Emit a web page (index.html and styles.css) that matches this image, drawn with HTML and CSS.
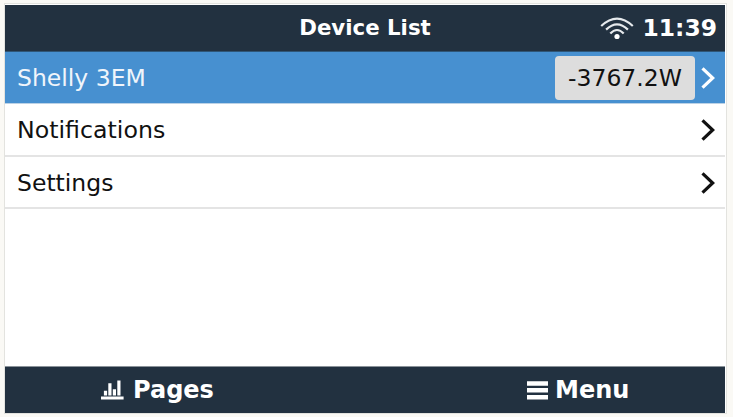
FILE: index.html
```html
<!DOCTYPE html>
<html lang="en">
<head>
<meta charset="utf-8">
<title>Device List</title>
<link rel="stylesheet" href="styles.css">
</head>
<body>
<main class="screen">
  <header class="topbar">
    <h1 class="title">Device List</h1>
    <div class="status">
      <svg class="wifi" width="34" height="24" viewBox="0 0 34 24" fill="none" stroke="#e6e9ec" stroke-width="2.2">
        <path d="M1.2 10Q17-4.8 32.8 10M6.1 13.6Q17 3.2 27.9 13.6M10.3 17.5Q17 10.5 23.7 17.5"/>
        <circle cx="17" cy="20.5" r="2.6" fill="#fff" stroke="none"/>
      </svg>
      <span class="clock">11:39</span>
    </div>
  </header>
  <nav class="list">
    <div class="row selected">
      <span class="label">Shelly 3EM</span>
      <span class="value">-3767.2W</span>
      <svg class="chevron" width="14" height="22" viewBox="0 0 14 22"><path d="M1.5 1.4 11.7 11 1.5 20.6"/></svg>
    </div>
    <div class="row">
      <span class="label wide">Notifications</span>
      <svg class="chevron" width="14" height="22" viewBox="0 0 14 22"><path d="M1.5 1.4 11.7 11 1.5 20.6"/></svg>
    </div>
    <div class="row last">
      <span class="label">Settings</span>
      <svg class="chevron" width="14" height="22" viewBox="0 0 14 22"><path d="M1.5 1.4 11.7 11 1.5 20.6"/></svg>
    </div>
  </nav>
  <footer class="toolbar">
    <div class="action pages">
      <svg width="23" height="20" viewBox="0 0 23 20" fill="#fff"><path d="M0 16.5h22.6v2.9H0zM2.9 10.7h3.2v4.8H2.9zM7.3 3.2h3.2v12.3H7.3zM11.8 9.2h3.2v6.3h-3.2zM16.3.4h3.2v15.1h-3.2z"/></svg>
      <span>Pages</span>
    </div>
    <div class="action menu">
      <svg width="21" height="20" viewBox="0 0 21 20" fill="#fff"><path d="M0 1.2h21v4.5H0zM0 8h21v4.5H0zM0 15h21v4.5H0z"/></svg>
      <span>Menu</span>
    </div>
  </footer>
</main>
</body>
</html>
```
FILE: styles.css
```css
* { box-sizing: border-box; }

body {
  margin: 0;
  height: 417px;
  padding: 3px 7px 4px 4px;
  background: #faf9f5;
  font-family: "DejaVu Sans", sans-serif;
  font-size: 23.5px;
  color: #111;
  overflow: hidden;
}

.screen {
  display: flex;
  flex-direction: column;
  width: 723px;
  height: 411px;
  border: 1px solid #e3e3df;
  padding: 1px 1px 0 0;
  background: #fff;
}

.topbar {
  display: grid;
  grid-template-columns: 1fr auto 1fr;
  align-items: center;
  flex: none;
  height: 47px;
  background: #223140;
  border-bottom: 1px solid #2f5677;
  color: #fff;
}

.title {
  grid-column: 2;
  margin: 0;
  font-size: 21.3px;
  line-height: 46px;
}

.status {
  display: flex;
  justify-content: flex-end;
  align-items: center;
  gap: 9px;
  padding-right: 8px;
}

.clock {
  font-size: 23.4px;
  font-weight: bold;
  line-height: 46px;
}

.list { flex: 1; }

.row {
  display: flex;
  align-items: center;
  height: 53px;
  padding: 0 10px 0 12px;
  border-bottom: 2px solid #e4e4e4;
}

.row.last {
  height: 52px;
  padding-top: 1px;
}

.row.selected {
  height: 52px;
  background: #4790d0;
  border-bottom: 1px solid #bcd2e6;
  color: #f0f5fb;
}

.label { flex: 1; }

.label.wide { font-size: 23.7px; }

.value {
  width: 140px;
  height: 44px;
  margin-right: 6px;
  border-radius: 4px;
  background: #ddd;
  color: #111;
  line-height: 44px;
  text-align: center;
}

.chevron {
  fill: none;
  stroke: #111;
  stroke-width: 3.2;
}

.selected .chevron { stroke: #fff; }

.toolbar {
  display: flex;
  flex: none;
  height: 47px;
  border-top: 1px solid #8a9299;
  background: #223140;
  color: #fff;
  font-size: 24px;
  font-weight: bold;
}

.action {
  display: flex;
  align-items: center;
  width: 50%;
}

.pages { padding-left: 96px; gap: 9px; }
.menu { padding-left: 162px; gap: 7px; }
```
